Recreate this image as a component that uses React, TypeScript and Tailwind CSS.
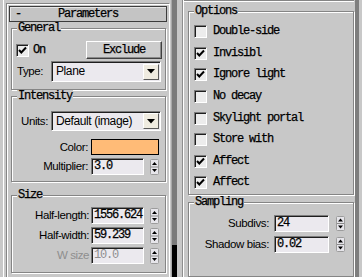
import React from 'react';

const mono =
  "font-['Liberation_Mono',monospace] text-[12px] leading-[13px] tracking-[-1.2px] [-webkit-text-stroke:0.25px_black]";
const sans = "font-['Liberation_Sans',Arial,sans-serif] text-[11.5px] leading-[13px] tracking-[-0.4px]";
const sunken =
  'border border-t-[#7c7c7c] border-l-[#7c7c7c] border-r-white border-b-white shadow-[inset_1px_1px_0_#1e1e1e]';

function GroupBox({ label, className, children }: { label: string; className: string; children?: React.ReactNode }) {
  return (
    <div className={`relative border border-[#858585] shadow-[inset_1px_1px_0_#fff,1px_1px_0_#fff] ${className}`}>
      <span className={`absolute left-[5px] top-[-7px] bg-[#c8c8c8] px-[1px] text-black ${mono}`}>{label}</span>
      {children}
    </div>
  );
}

function Spinner({ h = 16 }: { h?: number }) {
  const mid = h / 2;
  return (
    <svg width="9" height={h} viewBox={`0 0 9 ${h}`} className="block shrink-0">
      <rect x="0.5" y="0.5" width="8" height={h - 1} rx="1" fill="#e6e5ea" stroke="#9c9c9c" />
      <path d={`M4.5 ${mid - 5} L7 ${mid - 2} L2 ${mid - 2}Z`} fill="#000" />
      <line x1="1" y1={mid} x2="8" y2={mid} stroke="#8a8a8a" />
      <path d={`M2 ${mid + 2} L7 ${mid + 2} L4.5 ${mid + 5}Z`} fill="#000" />
    </svg>
  );
}

function CheckBox({ checked }: { checked: boolean }) {
  return (
    <div className={`flex h-[13px] w-[13px] shrink-0 items-center justify-center bg-[#ececec] ${sunken}`}>
      {checked && (
        <svg width="9" height="9" viewBox="0 0 9 9" className="block">
          <path d="M1 4 L3.3 6.5 L8 1.5" fill="none" stroke="#000" strokeWidth="2" />
        </svg>
      )}
    </div>
  );
}

function Dropdown({ value, h }: { value: string; h: string }) {
  return (
    <div className={`flex w-[110px] items-center bg-[#ebe9ee] pl-[4px] ${h} ${sunken}`}>
      <span className={`flex-1 text-black ${sans} text-[12px]`}>{value}</span>
      <div className="mr-px flex h-[16px] w-[16px] items-center justify-center border border-t-white border-l-white border-r-[#5a5a5a] border-b-[#5a5a5a] bg-[#efebe0]">
        <svg width="8" height="5" viewBox="0 0 8 5" className="block">
          <path d="M0 0 H8 L4 4.5Z" fill="#000" />
        </svg>
      </div>
    </div>
  );
}

function NumRow({
  label,
  value,
  labelW,
  inputW,
  gap,
  spinGap,
  spinH,
  disabled,
  className,
}: {
  label: string;
  value: string;
  labelW: string;
  inputW: string;
  gap: string;
  spinGap: string;
  spinH?: number;
  disabled?: boolean;
  className: string;
}) {
  const color = disabled ? 'text-[#8e8e8e]' : 'text-black';
  return (
    <div className={`flex items-center ${className}`}>
      <span className={`${labelW} text-right ${sans} ${color}`}>{label}</span>
      <div className={`flex h-[17px] items-center bg-[#ebe9ee] pl-[2px] ${gap} ${inputW} ${sunken}`}>
        <span className={`${mono} ${disabled ? 'text-[#8e8e8e] [-webkit-text-stroke:0px]' : 'text-black'}`}>{value}</span>
      </div>
      <div className={spinGap}>
        <Spinner h={spinH} />
      </div>
    </div>
  );
}

const options: { label: string; checked: boolean }[] = [
  { label: 'Double-side', checked: false },
  { label: 'Invisibl', checked: true },
  { label: 'Ignore light', checked: true },
  { label: 'No decay', checked: false },
  { label: 'Skylight portal', checked: false },
  { label: 'Store with', checked: false },
  { label: 'Affect', checked: true },
  { label: 'Affect', checked: true },
];

export default function App() {
  return (
    <div className="flex h-[277px] w-[362px] overflow-hidden bg-[#c8c8c8]">
      {/* Left rollout */}
      <div className="flex h-full w-[171px]">
        <div className="w-[3px]" />
        <div className="w-px bg-white" />
        <div className="w-[2px]" />
        <div className="mt-[3px] flex w-[164px] flex-col border-l border-r border-t border-l-[#858585] border-t-[#858585] border-r-white shadow-[inset_1px_1px_0_#fff]">
          {/* Header */}
          <div className="ml-[2px] mt-[2px] grid h-[16px] w-[158px] grid-cols-[20px_1fr_20px] items-center border border-[#3c3c3c] bg-[#c4c4c4] shadow-[inset_1px_1px_0_#e6e6e6]">
            <span className={`pl-[5px] ${mono}`}>-</span>
            <span className={`text-center ${mono}`}>Parameters</span>
            <span />
          </div>

          {/* General */}
          <GroupBox label="General" className="ml-[4px] mt-[6px] h-[62px] w-[155px]">
            <div className="mt-[12px] flex h-[18px] items-center">
              <div className="ml-[4px]">
                <CheckBox checked />
              </div>
              <span className={`ml-[4px] ${mono}`}>On</span>
              <div
                className={`ml-auto mr-[3px] flex h-[18px] w-[76px] items-center justify-center border border-t-white border-l-white border-r-[#404040] border-b-[#404040] bg-[#cdcdcd] shadow-[inset_-1px_-1px_0_#8a8a8a] ${mono}`}
              >
                Exclude
              </div>
            </div>
            <div className="mt-[2px] flex items-center justify-between pl-[5px] pr-[4px]">
              <span className={sans}>Type:</span>
              <Dropdown value="Plane" h="h-[21px]" />
            </div>
          </GroupBox>

          {/* Intensity */}
          <GroupBox label="Intensity" className="ml-[4px] mt-[6px] h-[86px] w-[155px]">
            <div className="mt-[14px] flex items-center justify-between pl-[9px] pr-[4px]">
              <span className={sans}>Units:</span>
              <Dropdown value="Default (image)" h="h-[20px]" />
            </div>
            <div className="mt-[8px] flex items-center">
              <span className={`w-[76px] text-right ${sans}`}>Color:</span>
              <div className="ml-[3px] h-[16px] w-[68px] border border-black bg-[#ffbb77]" />
            </div>
            <NumRow
              label="Multiplier:"
              value="3.0"
              labelW="w-[76px]"
              inputW="w-[53px]"
              gap="ml-[3px]"
              spinGap="ml-[6px]"
              className="mt-[3px]"
            />
          </GroupBox>

          {/* Size */}
          <GroupBox label="Size" className="ml-[4px] mt-[13px] h-[78px] w-[155px]">
            <NumRow
              label="Half-length:"
              value="1556.624"
              labelW="w-[77px]"
              inputW="w-[53px]"
              gap="ml-[2px]"
              spinGap="ml-[6px]"
              className="mt-[11px]"
            />
            <NumRow
              label="Half-width:"
              value="59.239"
              labelW="w-[77px]"
              inputW="w-[53px]"
              gap="ml-[2px]"
              spinGap="ml-[6px]"
              className="mt-[3px]"
            />
            <NumRow
              label="W size"
              value="10.0"
              labelW="w-[77px]"
              inputW="w-[53px]"
              gap="ml-[2px]"
              spinGap="ml-[6px]"
              disabled
              className="mt-[3px]"
            />
          </GroupBox>
        </div>
        <div className="w-px" />
      </div>

      {/* Scroll indicator */}
      <div className="w-px bg-[#a8a8a8]" />
      <div className="flex w-[5px] flex-col">
        <div className="h-[245px] bg-[#7b7b7b]" />
        <div className="flex-1 bg-black" />
      </div>
      <div className="w-[5px]" />

      {/* Right rollout */}
      <div className="flex w-[180px]">
        <div className="flex w-[173px] flex-col border-l border-l-[#8e8e8e] shadow-[inset_1px_0_0_#fff]">
          <div className="ml-px h-[2px] w-[170px] border-b border-t border-b-white border-t-[#858585]" />

          <GroupBox label="Options" className="ml-[5px] mt-[9px] h-[198px] w-[166px]">
            <div className="mt-[9px] flex flex-col">
              {options.map((o, i) => (
                <div key={i} className="flex h-[21.6px] items-center pl-[5px]">
                  <CheckBox checked={o.checked} />
                  <span className={`ml-[6px] ${mono}`}>{o.label}</span>
                </div>
              ))}
            </div>
          </GroupBox>

          <GroupBox label="Sampling" className="ml-[5px] mt-[7px] h-[80px] w-[166px]">
            <NumRow
              label="Subdivs:"
              value="24"
              labelW="w-[80px]"
              inputW="w-[55px]"
              gap="ml-[5px]"
              spinGap="ml-[7px]"
              spinH={15}
              className="mt-[12px]"
            />
            <NumRow
              label="Shadow bias:"
              value="0.02"
              labelW="w-[80px]"
              inputW="w-[55px]"
              gap="ml-[5px]"
              spinGap="ml-[7px]"
              spinH={15}
              className="mt-[4px]"
            />
          </GroupBox>
        </div>
        <div className="w-[4px] bg-[#7e7e7e]" />
        <div className="w-[3px]" />
      </div>
    </div>
  );
}
